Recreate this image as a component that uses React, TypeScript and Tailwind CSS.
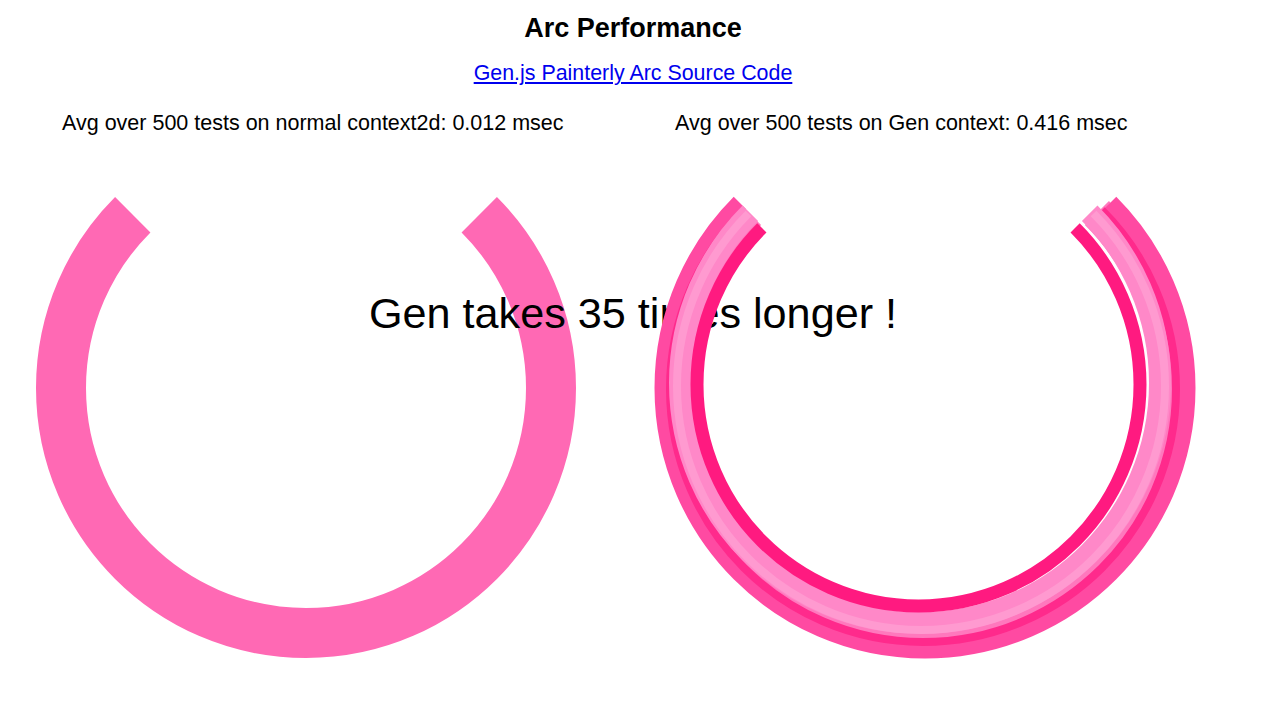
const arcPath = (cx: number, cy: number, r: number) => {
  const d = r * Math.SQRT1_2;
  return `M ${cx - d} ${cy - d} A ${r} ${r} 0 1 0 ${cx + d} ${cy - d}`;
};

// strokes of the "painterly" arc, svg coords (svg starts at page x=612, y=150)
const genStrokes = [
  { cx: 311, cy: 237, r: 246, w: 34, color: "#ff78bd" },
  { cx: 313, cy: 238, r: 262, w: 17, color: "#ff4aa2" },
  { cx: 311, cy: 239, r: 253, w: 8, color: "#ff2a8c" },
  { cx: 308, cy: 233, r: 240, w: 22, color: "#ff88c8" },
  { cx: 309, cy: 236, r: 244, w: 8, color: "#ff9ad0" },
  { cx: 306.5, cy: 234.5, r: 221.5, w: 13, color: "#ff1a80" },
];

export default function App() {
  return (
    <div
      className="relative w-[1266px] h-[701px] bg-white text-black overflow-hidden"
      style={{ fontFamily: '"Liberation Sans", Arial, Helvetica, sans-serif' }}
    >
      <h2 className="pt-3 text-center text-[27px] leading-[32px] font-bold">
        Arc Performance
      </h2>
      <div className="mt-4 text-center text-[21.4px] leading-[26px]">
        <a href="#" className="text-[#0000ee] underline">
          Gen.js Painterly Arc Source Code
        </a>
      </div>

      <div className="mt-6 flex text-[21.5px] leading-[26px]">
        <div className="w-[612px] pl-[62px]">
          Avg over 500 tests on normal context2d: 0.012 msec
        </div>
        <div className="w-[612px] pl-[63px]">
          Avg over 500 tests on Gen context: 0.416 msec
        </div>
      </div>

      <div className="mt-[14px] flex">
        <svg width="612" height="540" viewBox="0 0 612 540">
          <path
            d={arcPath(306, 238, 245)}
            fill="none"
            stroke="#ff69b4"
            strokeWidth={50}
          />
        </svg>
        <div className="absolute inset-x-0 top-[292px] text-center text-[43.2px] leading-[43px]">
          Gen takes 35 times longer !
        </div>
        <svg
          width="612"
          height="540"
          viewBox="0 0 612 540"
          className="relative z-10"
        >
          {genStrokes.map((s, i) => (
            <path
              key={i}
              d={arcPath(s.cx, s.cy, s.r)}
              fill="none"
              stroke={s.color}
              strokeWidth={s.w}
            />
          ))}
        </svg>
      </div>
    </div>
  );
}
